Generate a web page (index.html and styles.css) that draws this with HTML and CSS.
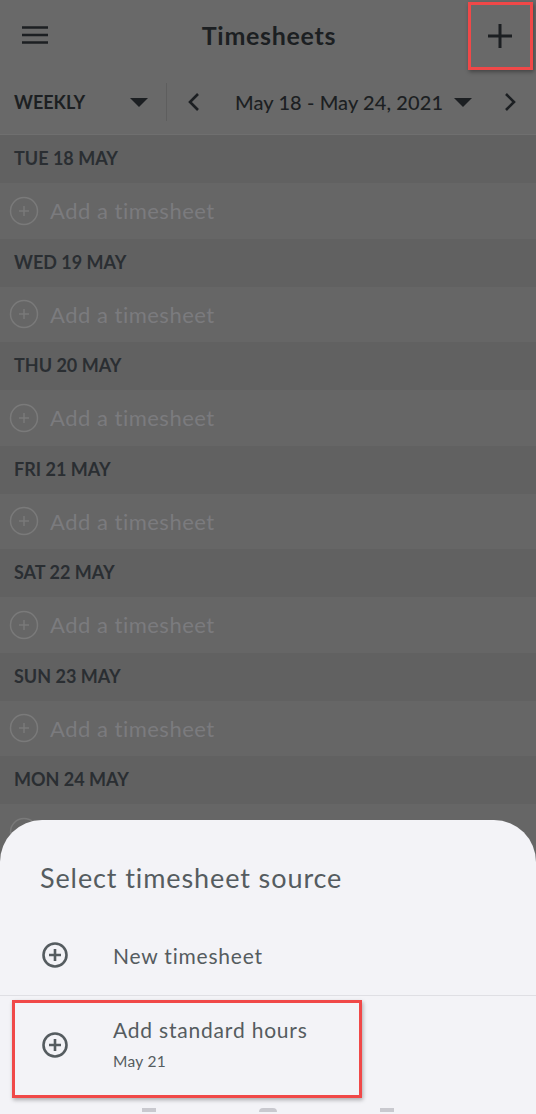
FILE: index.html
```html
<!DOCTYPE html>
<html lang="en">
<head>
    <meta charset="UTF-8">
    <title>Timesheets</title>
    <link rel="stylesheet" href="styles.css">
</head>
<body>
<div class="screen">
    <div class="app">
        <header class="topbar">
            <button class="icon-btn menu-btn" aria-label="Menu">
                <svg width="26" height="18" viewBox="0 0 26 18">
                    <path d="M0 1.5h26M0 9h26M0 16.5h26" stroke="#1c1f22" stroke-width="2.6"/>
                </svg>
            </button>
            <div class="title">Timesheets</div>
            <button class="icon-btn add-btn highlight" aria-label="Add">
                <svg width="26" height="26" viewBox="0 0 26 26">
                    <path d="M13 1v24M1 13h24" stroke="#1c1f22" stroke-width="3"/>
                </svg>
            </button>
        </header>

        <div class="tabs">
            <div class="period">
                <span>WEEKLY</span>
                <span class="caret"></span>
            </div>
            <div class="range">
                <svg class="chev" width="14" height="20" viewBox="0 0 14 20">
                    <path d="M11 2 3 10l8 8" fill="none" stroke="#1c1f22" stroke-width="2.6"/>
                </svg>
                <span class="range-text">May 18 - May 24, 2021</span>
                <span class="caret"></span>
                <svg class="chev" width="14" height="20" viewBox="0 0 14 20">
                    <path d="m3 2 8 8-8 8" fill="none" stroke="#1c1f22" stroke-width="2.6"/>
                </svg>
            </div>
        </div>

        <div class="days" id="days"></div>
    </div>

    <div class="sheet">
        <div class="sheet-title">Select timesheet source</div>
        <div class="option">
            <svg class="opt-icon" width="28" height="28" viewBox="0 0 28 28">
                <circle cx="14" cy="14" r="11.5" fill="none" stroke="#555c60" stroke-width="2.6"/>
                <path d="M14 8v12M8 14h12" stroke="#555c60" stroke-width="2.6"/>
            </svg>
            <div class="opt-text">New timesheet</div>
        </div>
        <div class="option option-tall">
            <div class="highlight-box"></div>
            <svg class="opt-icon" width="28" height="28" viewBox="0 0 28 28">
                <circle cx="14" cy="14" r="11.5" fill="none" stroke="#555c60" stroke-width="2.6"/>
                <path d="M14 8v12M8 14h12" stroke="#555c60" stroke-width="2.6"/>
            </svg>
            <div>
                <div class="opt-text">Add standard hours</div>
                <div class="opt-sub">May 21</div>
            </div>
        </div>
        <div class="navbar">
            <span class="nav-dot"></span>
            <span class="nav-dot round"></span>
            <span class="nav-dot"></span>
        </div>
    </div>
</div>

<script>
    // Список дней недели
    const days = ["TUE 18 MAY", "WED 19 MAY", "THU 20 MAY", "FRI 21 MAY", "SAT 22 MAY", "SUN 23 MAY", "MON 24 MAY"];
    const list = document.getElementById("days");

    days.forEach(day => {
        const head = document.createElement("div");
        head.className = "day-head";
        head.textContent = day;
        list.appendChild(head);

        const row = document.createElement("div");
        row.className = "day-row";
        row.innerHTML = `
            <svg width="30" height="30" viewBox="0 0 30 30">
                <circle cx="15" cy="15" r="13.5" fill="none" stroke="#7a7a7a" stroke-width="1.5"/>
                <path d="M15 10v10M10 15h10" stroke="#7a7a7a" stroke-width="1.5"/>
            </svg>
            <span>Add a timesheet</span>
        `;
        list.appendChild(row);
    });
</script>
</body>
</html>
```

FILE: styles.css
```css
body {
    margin: 0;
    padding: 0;
    font-family: "Lato", "Open Sans", sans-serif;
    background-color: #666;
}
.screen {
    position: relative;
    width: 536px;
    height: 1114px;
    overflow: hidden;
}
.app {
    background-color: #676767;
}

/* Верхняя панель */
.topbar {
    height: 70px;
    display: flex;
    align-items: center;
    justify-content: space-between;
    background-color: #696969;
}
.icon-btn {
    border: none;
    background: none;
    padding: 0;
    display: flex;
    align-items: center;
    justify-content: center;
}
.menu-btn {
    width: 70px;
    height: 70px;
}
.add-btn {
    width: 65px;
    height: 68px;
    margin-right: 3px;
    margin-top: 2px;
}
.highlight {
    border: 3px solid #f04848;
    box-sizing: border-box;
    box-shadow: 1px 2px 4px rgba(0,0,0,0.35);
}
.title {
    font-size: 25px;
    font-weight: 700;
    color: #1c1f22;
    letter-spacing: 0.7px;
}

/* Переключатель периода */
.tabs {
    height: 65px;
    display: flex;
    align-items: center;
    background-color: #696969;
    border-bottom: 1px solid #6f6f6f;
    box-sizing: border-box;
}
.period {
    width: 167px;
    height: 38px;
    box-sizing: border-box;
    display: flex;
    align-items: center;
    justify-content: space-between;
    padding: 0 18px 0 14px;
    border-right: 1px solid #5e5e5e;
    font-size: 18px;
    font-weight: 700;
    color: #1c1f22;
}
.caret {
    width: 0;
    height: 0;
    border-left: 9px solid transparent;
    border-right: 9px solid transparent;
    border-top: 9px solid #1c1f22;
}
.range {
    flex: 1;
    display: flex;
    align-items: center;
    padding: 0 0 0 20px;
    color: #1c1f22;
    white-space: nowrap;
}
.range-text {
    font-size: 20px;
    font-weight: 500;
    letter-spacing: 0.1px;
    margin: 0 11px 0 34px;
}
.range .caret {
    margin-right: 31px;
}

/* Дни недели */
.day-head {
    height: 48px;
    line-height: 46px;
    padding-left: 14px;
    background-color: #616161;
    font-size: 18px;
    font-weight: 700;
    color: #2a2e32;
}
.day-row {
    height: 55.5px;
    display: flex;
    align-items: center;
    gap: 11px;
    padding-left: 9px;
    background-color: #666;
    font-size: 22px;
    letter-spacing: 0.5px;
    color: #7b7b7e;
}

/* Нижняя панель выбора */
.sheet {
    position: absolute;
    left: 0;
    right: 0;
    top: 820px;
    bottom: 0;
    background-color: #f3f3f7;
    border-radius: 42px 42px 0 0;
}
.sheet-title {
    height: 95px;
    box-sizing: border-box;
    padding: 42px 0 0 40px;
    font-size: 27px;
    letter-spacing: 0.9px;
    color: #555c60;
    line-height: 32px;
}
.option {
    position: relative;
    height: 80px;
    display: flex;
    align-items: center;
    padding-left: 41px;
    border-bottom: 1px solid #dfdfe4;
}
.option-tall {
    height: 100px;
    border-bottom: none;
    align-items: flex-start;
    padding-top: 21px;
    box-sizing: border-box;
}
.option-tall .opt-icon {
    margin-top: 14px;
}
.opt-icon {
    margin-right: 44px;
}
.opt-text {
    font-size: 21px;
    letter-spacing: 0.8px;
    color: #555c60;
}
.opt-sub {
    font-size: 15.5px;
    letter-spacing: 0.3px;
    color: #555c60;
    margin-top: 10px;
}
.highlight-box {
    position: absolute;
    left: 12px;
    top: 4px;
    width: 350px;
    height: 98px;
    border: 3px solid #f04848;
    box-sizing: border-box;
    box-shadow: 1px 2px 4px rgba(0,0,0,0.3);
}
.navbar {
    display: flex;
    justify-content: space-around;
    padding: 0 90px;
    margin-top: 12px;
}
.nav-dot {
    width: 14px;
    height: 4px;
    background-color: #c9c9cf;
}
.nav-dot.round {
    width: 18px;
    border-radius: 8px 8px 0 0;
}
```
